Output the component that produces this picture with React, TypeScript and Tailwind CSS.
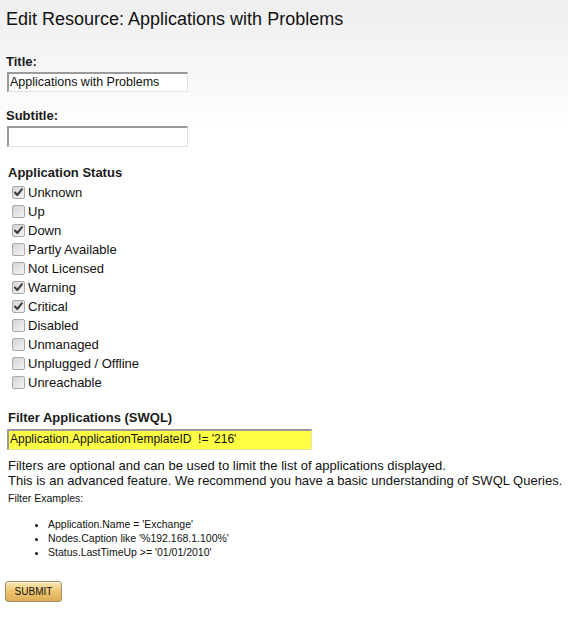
import React from "react";

const statuses: [string, boolean][] = [
  ["Unknown", true],
  ["Up", false],
  ["Down", true],
  ["Partly Available", false],
  ["Not Licensed", false],
  ["Warning", true],
  ["Critical", true],
  ["Disabled", false],
  ["Unmanaged", false],
  ["Unplugged / Offline", false],
  ["Unreachable", false],
];

function Box({ checked }: { checked: boolean }) {
  return (
    <span className="relative inline-block w-[13px] h-[13px] rounded-[2px] border border-[#a9a9a9] bg-gradient-to-br from-[#d4d4d4] to-[#f4f4f4] shrink-0">
      {checked && (
        <svg viewBox="0 0 13 13" className="absolute left-[-1px] top-[-1px] w-[13px] h-[13px]">
          <path d="M3 6.5 L5.3 9 L10 3.2" fill="none" stroke="#3c3c3c" strokeWidth="2" strokeLinecap="round" strokeLinejoin="round" />
        </svg>
      )}
    </span>
  );
}

export default function App() {
  return (
    <div
      className="min-h-[624px] w-[568px] bg-gradient-to-b from-[#eeeeee] via-[#f8f8f8] via-[80px] to-white to-[130px] text-black"
      style={{ fontFamily: '"Liberation Sans", Arial, sans-serif' }}
    >
      <div className="pt-[8px] pl-[6px]">
        <h1 className="text-[18px] leading-[22px] font-normal text-[#111]">Edit Resource: Applications with Problems</h1>

        <div className="mt-[24px] text-[13px] leading-[16px] font-bold text-[#1a1a1a]">Title:</div>
        <div className="mt-[2px] ml-[1px] w-[181px] h-[20px] bg-white border-t-2 border-l-2 border-[#9a9a9a] border-r border-b border-r-[#e2e2e2] border-b-[#e2e2e2] text-[12.5px] leading-[16px] pl-[1px] text-[#111] whitespace-nowrap overflow-hidden">
          Applications with Problems
        </div>

        <div className="mt-[16px] text-[13px] leading-[16px] font-bold text-[#1a1a1a]">Subtitle:</div>
        <div className="mt-[2px] ml-[1px] w-[181px] h-[21px] bg-white border-t-2 border-l-2 border-[#9a9a9a] border-r border-b border-r-[#e2e2e2] border-b-[#e2e2e2]" />

        <div className="mt-[18px] ml-[2px] text-[13px] leading-[16px] font-bold text-[#1a1a1a]">Application Status</div>
        <div className="mt-[2px] ml-[6px] flex flex-col">
          {statuses.map(([label, checked]) => (
            <div key={label} className="flex items-center h-[19px]">
              <Box checked={checked} />
              <span className="ml-[3px] text-[13px] leading-[19px] text-[#111]">{label}</span>
            </div>
          ))}
        </div>

        <div className="mt-[18px] ml-[2px] text-[13px] leading-[16px] font-bold text-[#1a1a1a]">Filter Applications (SWQL)</div>
        <div className="mt-[3px] ml-[1px] w-[305px] h-[21px] bg-[#ffff44] border-t-2 border-l-2 border-[#9a9a9a] border-r border-b border-r-[#e4e4a8] border-b-[#e4e4a8] text-[12px] leading-[17px] pl-[1px] text-[#111] whitespace-pre overflow-hidden">
          {"Application.ApplicationTemplateID  != '216'"}
        </div>

        <div className="mt-[8px] ml-[2px] text-[13px] leading-[15px] text-[#111]">
          <div>Filters are optional and can be used to limit the list of applications displayed.</div>
          <div>This is an advanced feature. We recommend you have a basic understanding of SWQL Queries.</div>
        </div>
        <div className="mt-[3px] ml-[2px] text-[10.5px] leading-[14px] text-[#111]">Filter Examples:</div>
        <ul className="mt-[12px] ml-[42px] list-disc text-[10.5px] leading-[14px] text-[#111]">
          <li>Application.Name = 'Exchange'</li>
          <li>Nodes.Caption like '%192.168.1.100%'</li>
          <li>Status.LastTimeUp &gt;= '01/01/2010'</li>
        </ul>

        <button className="mt-[22px] ml-[-1px] w-[57px] h-[21px] rounded-[3px] border border-[#a09070] bg-gradient-to-b from-[#fbe7b4] via-[#eec56e] to-[#dcae58] text-[10px] leading-[18px] text-[#111] shadow-[inset_0_1px_0_#fff6dc]">
          SUBMIT
        </button>
      </div>
    </div>
  );
}
